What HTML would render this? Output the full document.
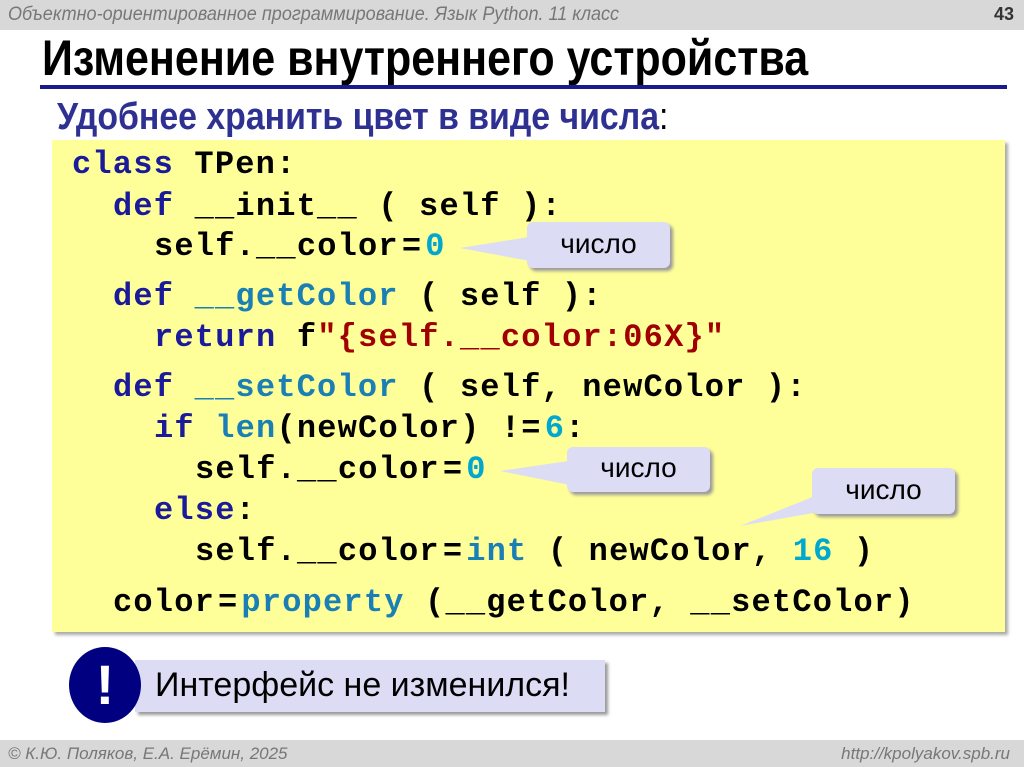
<!DOCTYPE html>
<html><head><meta charset="utf-8"><style>
body{margin:0;width:1024px;height:767px;background:#fff;position:relative;overflow:hidden;font-family:"Liberation Sans",sans-serif}
.hdr{position:absolute;left:0;top:0;width:1024px;height:30px;background:#d8d8d8}
.hdr i{position:absolute;left:8px;top:4px;font-size:19px;color:#777;display:inline-block;transform:scaleX(.95);transform-origin:left;white-space:nowrap}
.hdr b{position:absolute;right:10px;top:4px;font-size:18px;color:#333}
.title{position:absolute;left:42px;top:29px;font-size:50px;font-weight:bold;color:#000;transform:scaleX(.86);transform-origin:left;white-space:nowrap}
.rule{position:absolute;left:40px;top:85px;width:967px;height:4px;background:#1a1a8a}
.sub{position:absolute;left:57px;top:96px;font-size:38px;font-weight:bold;color:#2e3192;transform:scaleX(.89);transform-origin:left;white-space:nowrap}
.sub span{color:#000;font-weight:normal}
.code{position:absolute;left:52px;top:140px;width:953px;height:492px;background:#ffff99;box-shadow:3px 3px 3px #aaa}
.l{position:absolute;font-family:"Liberation Mono",monospace;font-weight:bold;font-size:32px;letter-spacing:1.2px;color:#000;white-space:pre;line-height:34px}
.e{padding:0 3px}
.k{color:#1a1a9a}.f{color:#1a7fb5}.n{color:#00a8d0}.s{color:#a00000}
.c{position:absolute;background:#dcdcf5;border-radius:6px;box-shadow:3px 3px 3px #999;font-size:28px;color:#000;text-align:center}
svg{position:absolute;left:0;top:0}
.ftr{position:absolute;left:0;top:740px;width:1024px;height:27px;background:#d8d8d8;color:#777;font-size:17px;font-style:italic}
</style></head><body>
<div class="hdr"><i>Объектно-ориентированное программирование. Язык Python. 11 класс</i><b>43</b></div>
<div class="title">Изменение внутреннего устройства</div>
<div class="rule"></div>
<div class="sub">Удобнее хранить цвет в виде числа<span>:</span></div>
<div class="code"></div>
<div class="l" style="left:72px;top:148px"><span class="k">class</span> TPen:</div>
<div class="l" style="left:113px;top:190px"><span class="k">def</span> __init__ ( self ):</div>
<div class="l" style="left:154px;top:230px">self.__color<span class="e">=</span><span class="n">0</span></div>
<div class="l" style="left:113px;top:280px"><span class="k">def</span> <span class="f">__getColor</span> ( self ):</div>
<div class="l" style="left:154px;top:321px"><span class="k">return</span> f<span class="s">"{self.__color:06X}"</span></div>
<div class="l" style="left:113px;top:371px"><span class="k">def</span> <span class="f">__setColor</span> ( self, newColor ):</div>
<div class="l" style="left:154px;top:412px"><span class="k">if</span> <span class="f">len</span>(newColor) !<span style="padding-right:3px">=</span><span class="n">6</span>:</div>
<div class="l" style="left:195px;top:453px">self.__color<span class="e">=</span><span class="n">0</span></div>
<div class="l" style="left:154px;top:494px"><span class="k">else</span>:</div>
<div class="l" style="left:195px;top:535px">self.__color<span class="e">=</span><span class="f">int</span> ( newColor, <span class="n">16</span> )</div>
<div class="l" style="left:113px;top:586px">color<span class="e">=</span><span class="f">property</span> (__getColor, __setColor)</div>
<svg width="1024" height="767">
<polygon points="460,248 535,236 535,262" fill="#dcdcf5"/>
<polygon points="500,471 575,460 575,486" fill="#dcdcf5"/>
<polygon points="740,526 830,490 830,510" fill="#dcdcf5"/>
</svg>
<div class="c" style="left:527px;top:222px;width:143px;height:46px;line-height:44px">число</div>
<div class="c" style="left:567px;top:447px;width:143px;height:45px;line-height:42px">число</div>
<div class="c" style="left:812px;top:468px;width:143px;height:46px;line-height:44px">число</div>
<div style="position:absolute;left:135px;top:660px;width:470px;height:52px;background:#dcdcf5;box-shadow:3px 3px 3px #999"></div>
<div style="position:absolute;left:155px;top:666px;font-size:34px;color:#000">Интерфейс не изменился!</div>
<div style="position:absolute;left:69px;top:647px;width:72px;height:76px;border-radius:50%;background:#000080;color:#fff;font-weight:bold;font-size:56px;text-align:center;line-height:76px">!</div>
<div class="ftr"><span style="position:absolute;left:8px;top:4px">© К.Ю. Поляков, Е.А. Ерёмин, 2025</span><span style="position:absolute;right:14px;top:4px">http://kpolyakov.spb.ru</span></div>
</body></html>
